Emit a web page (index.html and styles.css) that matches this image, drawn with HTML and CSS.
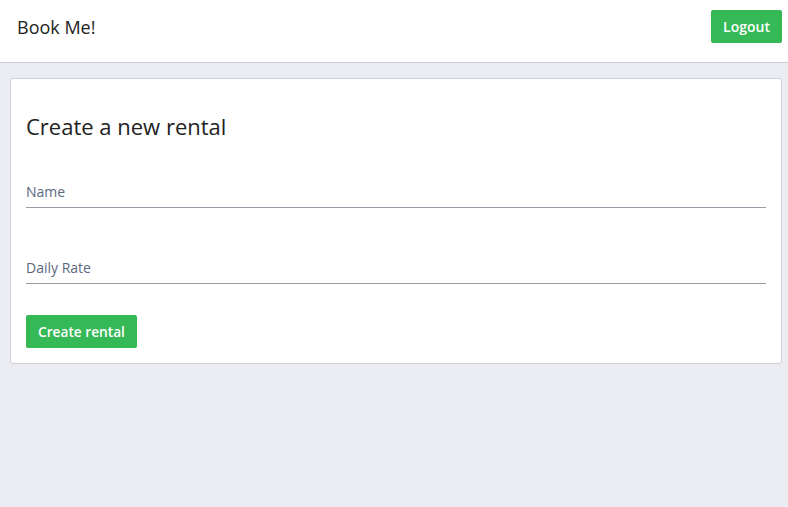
FILE: index.html
```html
<!DOCTYPE html>
<html>
<head>
<meta charset="utf-8">
<link rel="stylesheet" href="styles.css">
</head>
<body>
<header class="topbar">
  <div class="brand">Book Me!</div>
  <button class="btn">Logout</button>
</header>
<main class="page">
  <section class="card">
    <h1 class="title">Create a new rental</h1>
    <div class="field"><label class="label">Name</label></div>
    <div class="field"><label class="label">Daily Rate</label></div>
    <button class="btn btn-submit">Create rental</button>
  </section>
</main>
</body>
</html>
```
FILE: styles.css
```css
* { box-sizing: border-box; }
html, body { margin: 0; padding: 0; }
body {
  font-family: "Open Sans", "Noto Sans", sans-serif;
  background: #ecedf3;
  height: 507px;
  color: #222;
}
.topbar {
  height: 63px;
  background: #fff;
  border-bottom: 1px solid #c9ccd6;
  display: flex;
  align-items: flex-start;
  justify-content: space-between;
  padding: 10px 6px 0 17px;
}
.brand {
  font-size: 18px;
  line-height: 34px;
  color: #222;
}
.btn {
  background: #35b856;
  color: #fff;
  border: none;
  border-radius: 2px;
  font-family: inherit;
  font-size: 14px;
  font-weight: 600;
  height: 33px;
  padding: 0 12px;
  cursor: pointer;
}
.page {
  padding: 15px 6px 0 10px;
}
.card {
  background: #fff;
  border: 1px solid #cfd1d9;
  border-radius: 3px;
  padding: 25px 15px 14px 15px;
  height: 286px;
}
.title {
  margin: 0;
  font-size: 22px;
  font-weight: 400;
  line-height: 44px;
  color: #222;
}
.field {
  border-bottom: 1px solid #9a9ca8;
  height: 26px;
  margin-top: 50px;
  display: flex;
  align-items: flex-end;
  padding-bottom: 5px;
}
.field:first-of-type { margin-top: 34px; }
.label {
  font-size: 14px;
  line-height: 20px;
  color: #5b6880;
}
.btn-submit {
  margin-top: 31px;
  padding: 0 12px;
  font-size: 13.7px;
}
```
